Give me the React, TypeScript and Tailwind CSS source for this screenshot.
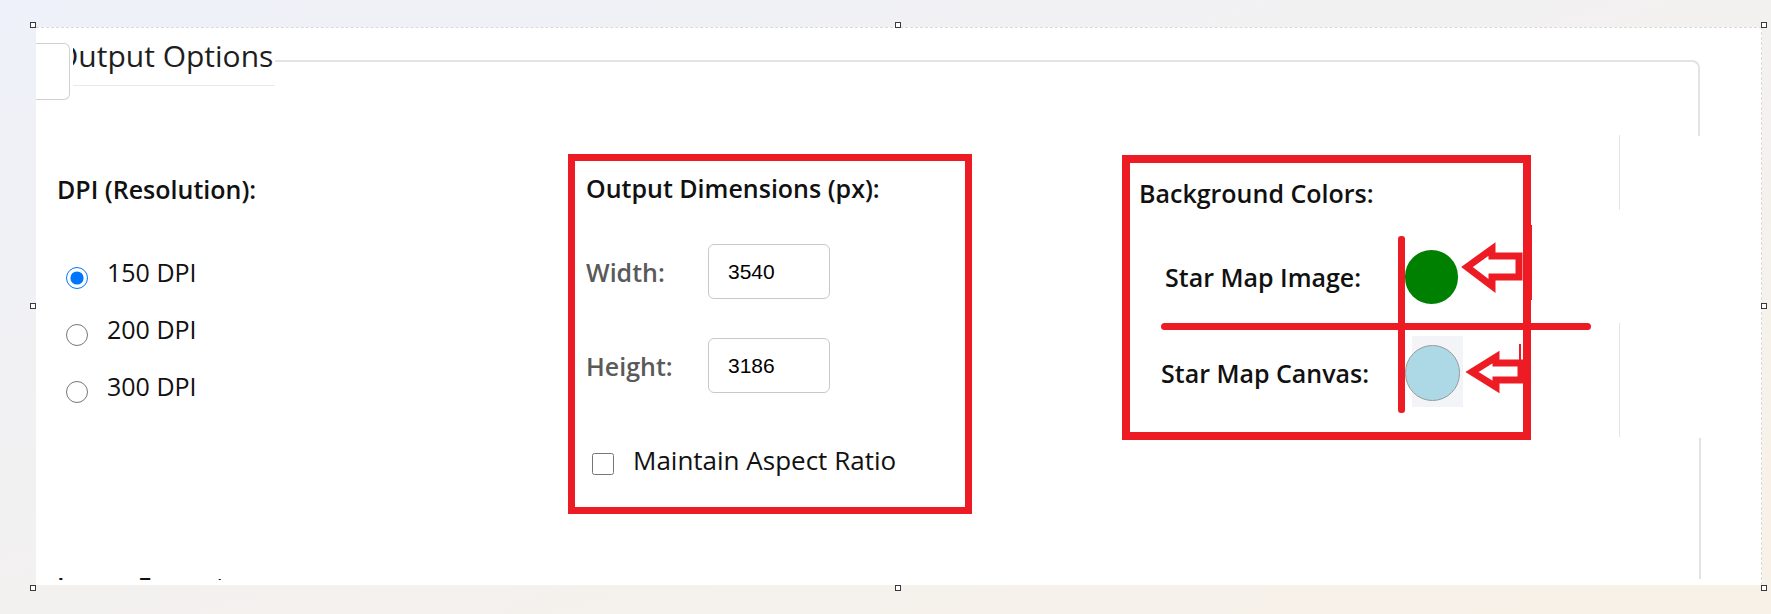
import React from 'react';

const handles = [
  'left-[30px] top-[22px]',
  'left-[895px] top-[22px]',
  'left-[1761px] top-[22px]',
  'left-[30px] top-[303px]',
  'left-[1761px] top-[303px]',
  'left-[30px] top-[585px]',
  'left-[895px] top-[585px]',
  'left-[1761px] top-[585px]',
];

const dpiOptions = ['150', '200', '300'];

const DpiColumn = () => (
  <div className="w-[511px] shrink-0">
    <div className="mt-[46px] text-[25px] font-semibold leading-[30px] text-[#111]">DPI (Resolution):</div>
    <div className="mt-[53px] flex flex-col gap-[27px]">
      {dpiOptions.map((dpi) => (
        <label key={dpi} className="flex h-[30px] items-start">
          <input
            type="radio"
            name="dpi"
            defaultChecked={dpi === '150'}
            className="m-0 ml-[9px] mt-[10px] h-[22px] w-[22px] accent-[#0075ff]"
          />
          <span className="ml-[19px] text-[25px] leading-[30px] text-[#111]">{dpi} DPI</span>
        </label>
      ))}
    </div>
  </div>
);

const SizeRow = ({ label, value }: { label: string; value: string }) => (
  <div className="flex h-[55px] items-center">
    <span className="w-[122px] text-[25px] font-semibold leading-[30px] text-[#5a5a5a]">{label}</span>
    <input
      readOnly
      type="text"
      value={value}
      className="h-[55px] w-[122px] rounded-[6px] border border-[#c9c9c9] pl-[19px] font-['Liberation_Sans',Arial,sans-serif] text-[21px] text-black outline-none"
    />
  </div>
);

const DimensionsBox = () => (
  <div className="mt-[26px] h-[360px] w-[404px] shrink-0 border-[7px] border-[#ed1c24] pl-[11px]">
    <div className="mt-[12px] text-[25px] font-semibold leading-[30px] text-[#111]">Output Dimensions (px):</div>
    <div className="mt-[41px]">
      <SizeRow label="Width:" value="3540" />
    </div>
    <div className="mt-[39px]">
      <SizeRow label="Height:" value="3186" />
    </div>
    <label className="mt-[52px] flex items-start pl-[6px]">
      <input type="checkbox" className="m-0 mt-[8px] h-[22px] w-[22px]" />
      <span className="ml-[19px] text-[26px] leading-[30px] text-[#111]">Maintain Aspect Ratio</span>
    </label>
  </div>
);

const ColorsBox = () => (
  <div className="ml-[150px] mt-[27px] h-[285px] w-[409px] shrink-0 border-[8px] border-[#ed1c24] pl-[9px]">
    <div className="mt-[15px] text-[25px] font-semibold leading-[30px] text-[#111]">Background Colors:</div>
    <div className="mt-[42px] flex h-[54px] items-center">
      <span className="ml-[26px] w-[240px] text-[25px] font-semibold leading-[30px] text-[#111]">Star Map Image:</span>
      <span className="h-[54px] w-[53px] rounded-full bg-[#008000]" />
    </div>
    <div className="mt-[41px] flex h-[56px] items-center">
      <span className="ml-[22px] w-[244px] text-[25px] font-semibold leading-[30px] text-[#111]">Star Map Canvas:</span>
      <div className="relative h-[56px] w-[55px]">
        <div className="absolute -top-[9px] left-[7px] h-[71px] w-[51px] bg-[#f3f4f7]" />
        <div className="relative h-[56px] w-[55px] rounded-full border border-[#9a9a9a] bg-[#add8e6]" />
      </div>
    </div>
  </div>
);

export default function App() {
  return (
    <div className="relative h-[614px] w-[1771px] overflow-hidden bg-linear-to-br from-[#eef1f9] to-[#f8f1e7] pl-[36px] pt-[27px] font-['Open_Sans',sans-serif]">
      <div className="h-[558px] w-[1726px] overflow-hidden border-t border-r border-dashed border-[#dadada] bg-white">
        <div className="h-[552px] overflow-hidden">
          {/* legend row */}
          <div className="flex h-[100px] items-start">
            <div className="mt-[15px] h-[57px] w-[34px] shrink-0 rounded-r-[6px] border border-l-0 border-solid border-[#d0d0d0]" />
            <div className="mt-[7px] flex w-[205px] shrink-0 flex-col">
              <div className="ml-[3px] h-[42px] overflow-hidden whitespace-nowrap">
                <span className="-ml-[18px] text-[30px] leading-[42px] text-[#1e1e1e]">Output Options</span>
              </div>
              <div className="ml-[3px] mt-[8px] h-px bg-[#e9e9e9]" />
            </div>
            <div className="mr-[61px] mt-[32px] h-[76px] flex-1 rounded-tr-[8px] border-t-2 border-r-2 border-solid border-[#e3e3e3]" />
          </div>

          {/* options */}
          <div className="flex items-start pl-[21px]">
            <DpiColumn />
            <DimensionsBox />
            <ColorsBox />
          </div>

          <div className="mt-[57px] pl-[21px] text-[25px] font-semibold leading-[30px] text-[#111]">Image Format:</div>
        </div>
      </div>

      {/* annotations drawn over the screenshot */}
      <svg className="pointer-events-none absolute inset-0" width="1771" height="614" viewBox="0 0 1771 614">
        <rect x="1699" y="438" width="2" height="141" fill="#e3e3e3" />
        <rect x="1619" y="135" width="1" height="75" fill="#e4e4e4" />
        <rect x="1619" y="323" width="1" height="114" fill="#e4e4e4" />
        <rect x="1398" y="236" width="7" height="177" rx="3" fill="#ed1c24" />
        <rect x="1161" y="323" width="430" height="7" rx="3.5" fill="#ed1c24" />
        <rect x="1529" y="225" width="3" height="75" fill="#ed1c24" />
        <rect x="1519" y="344" width="2" height="19" fill="#ed1c24" />
        <path
          d="M1467 267 L1492 249 L1492 256 L1519 256 L1519 277 L1492 277 L1492 286 Z"
          fill="none"
          stroke="#ed1c24"
          strokeWidth="7"
        />
        <path
          d="M1472 372 L1496 357 L1496 363 L1521 363 L1521 380 L1496 380 L1496 387 Z"
          fill="none"
          stroke="#ed1c24"
          strokeWidth="7"
        />
      </svg>

      {handles.map((pos) => (
        <div key={pos} className={`absolute ${pos} h-[6px] w-[6px] border border-[#3a3a3a] bg-white`} />
      ))}
    </div>
  );
}
